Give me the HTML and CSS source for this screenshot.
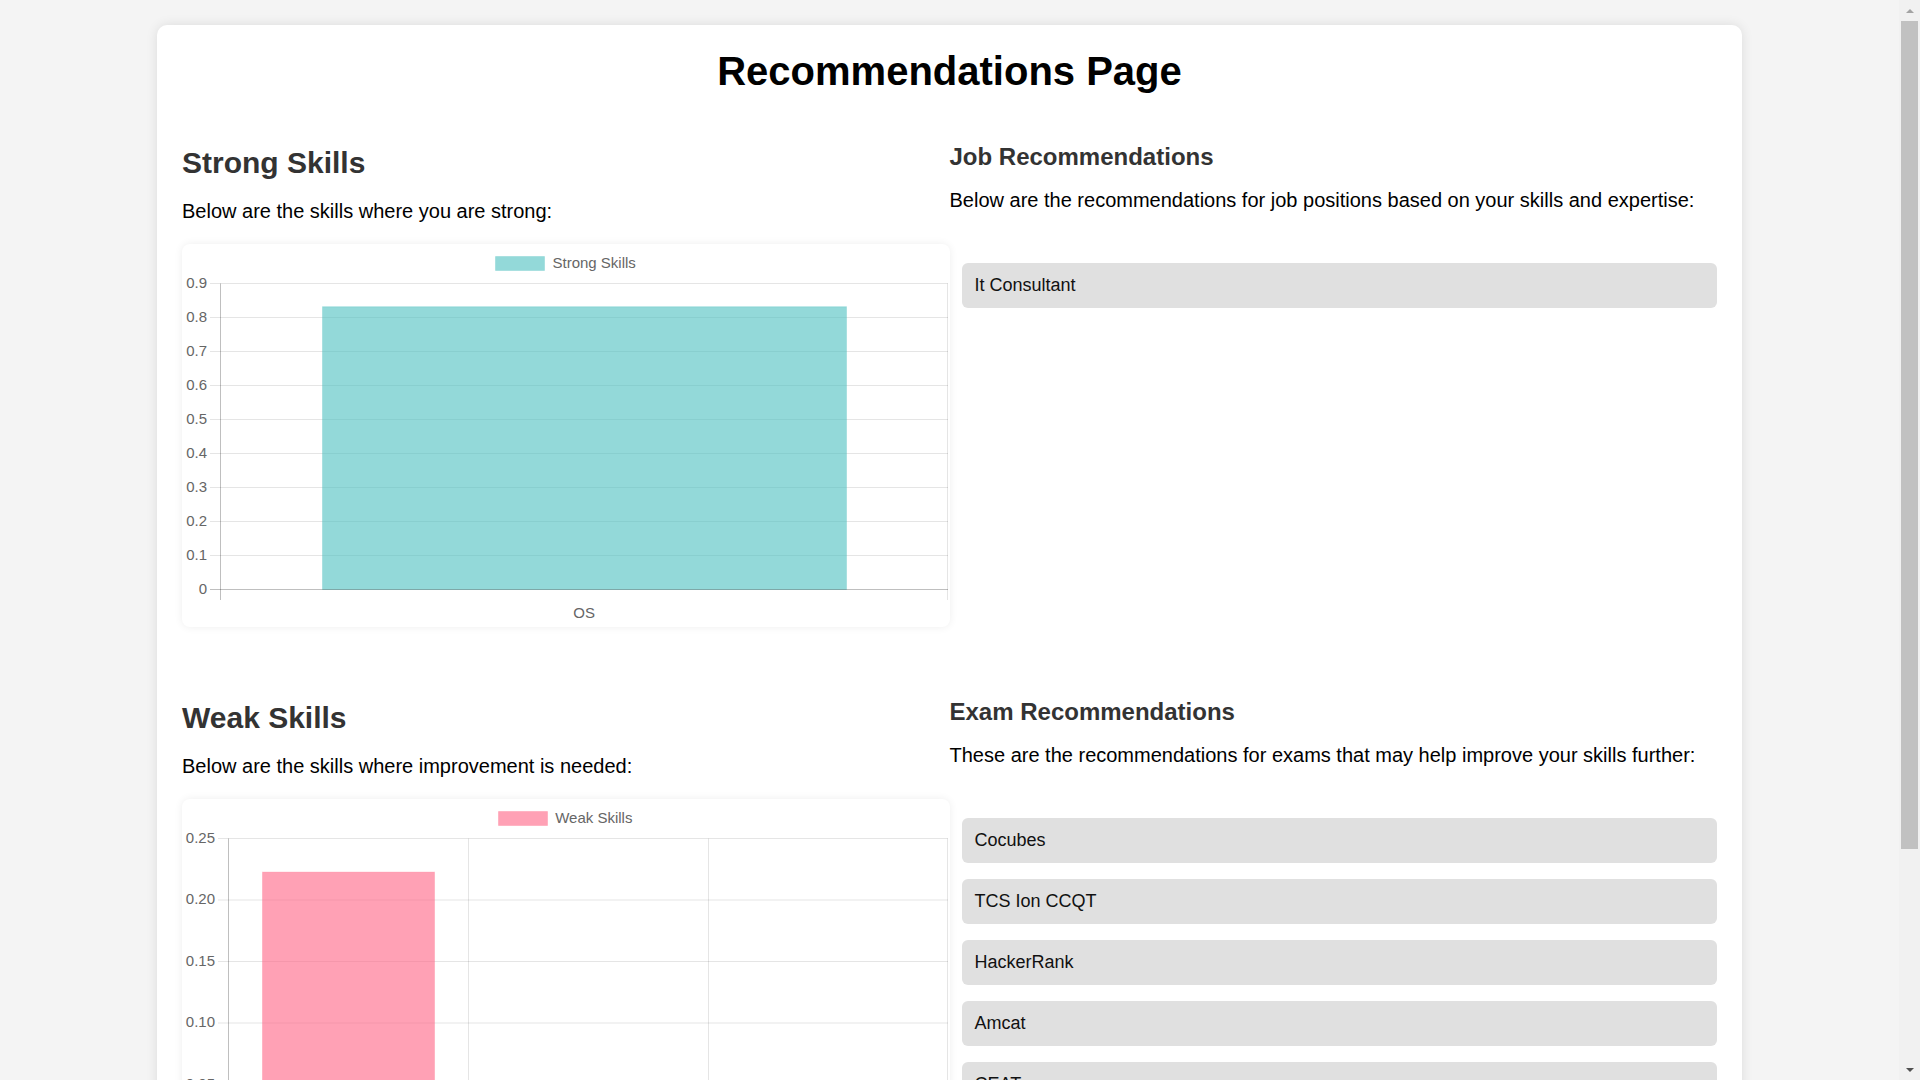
FILE: index.html
```html
<!DOCTYPE html>
<html lang="en">
<head>
<meta charset="utf-8">
<title>Recommendations Page</title>
<link rel="stylesheet" href="styles.css">
</head>
<body>
<div class="card">
  <h1 class="title">Recommendations Page</h1>

  <div class="row">
    <section class="col skills">
      <h2 class="skill-title">Strong Skills</h2>
      <p class="desc">Below are the skills where you are strong:</p>
      <div class="chart-box">
        <svg class="chart" width="767" height="383" viewBox="0 0 767 383">
          <rect class="leg-strong" x="313.5" y="12.5" width="49" height="14"/>
          <text class="axis-text" x="370.5" y="24">Strong Skills</text>
          <g class="grid">
            <line x1="28" y1="39.5" x2="766" y2="39.5"/>
            <line x1="28" y1="73.5" x2="766" y2="73.5"/>
            <line x1="28" y1="107.5" x2="766" y2="107.5"/>
            <line x1="28" y1="141.5" x2="766" y2="141.5"/>
            <line x1="28" y1="175.5" x2="766" y2="175.5"/>
            <line x1="28" y1="209.5" x2="766" y2="209.5"/>
            <line x1="28" y1="243.5" x2="766" y2="243.5"/>
            <line x1="28" y1="277.5" x2="766" y2="277.5"/>
            <line x1="28" y1="311.5" x2="766" y2="311.5"/>
            <line x1="765.5" y1="39.5" x2="765.5" y2="356"/>
          </g>
          <g class="axis-text end">
            <text x="25" y="43.5">0.9</text>
            <text x="25" y="77.5">0.8</text>
            <text x="25" y="111.5">0.7</text>
            <text x="25" y="145.5">0.6</text>
            <text x="25" y="179.5">0.5</text>
            <text x="25" y="213.5">0.4</text>
            <text x="25" y="247.5">0.3</text>
            <text x="25" y="281.5">0.2</text>
            <text x="25" y="315.5">0.1</text>
            <text x="25" y="349.5">0</text>
          </g>
          <rect class="bar-strong" x="140.5" y="62.7" width="524" height="282.8"/>
          <g class="zero">
            <line x1="28" y1="345.5" x2="766" y2="345.5"/>
            <line x1="38.5" y1="39.5" x2="38.5" y2="356"/>
          </g>
          <text class="axis-text mid" x="402.2" y="374">OS</text>
        </svg>
      </div>
    </section>

    <section class="col recs">
      <h3 class="rec-title">Job Recommendations</h3>
      <p class="desc">Below are the recommendations for job positions based on your skills and expertise:</p>
      <ul class="rec-list">
        <li class="rec-item">It Consultant</li>
      </ul>
    </section>
  </div>

  <div class="row">
    <section class="col skills">
      <h2 class="skill-title">Weak Skills</h2>
      <p class="desc">Below are the skills where improvement is needed:</p>
      <div class="chart-box">
        <svg class="chart" width="767" height="383" viewBox="0 0 767 383">
          <rect class="leg-weak" x="316.5" y="12.5" width="49" height="14"/>
          <text class="axis-text" x="373.2" y="24">Weak Skills</text>
          <g class="grid">
            <line x1="36" y1="39.5" x2="766" y2="39.5"/>
            <line x1="36" y1="101" x2="766" y2="101"/>
            <line x1="36" y1="162.5" x2="766" y2="162.5"/>
            <line x1="36" y1="224" x2="766" y2="224"/>
            <line x1="36" y1="285.5" x2="766" y2="285.5"/>
            <line x1="286.5" y1="39.5" x2="286.5" y2="357"/>
            <line x1="526.5" y1="39.5" x2="526.5" y2="357"/>
            <line x1="765.5" y1="39.5" x2="765.5" y2="357"/>
          </g>
          <g class="axis-text end">
            <text x="33" y="43.5">0.25</text>
            <text x="33" y="105">0.20</text>
            <text x="33" y="166.5">0.15</text>
            <text x="33" y="228">0.10</text>
            <text x="33" y="289.5">0.05</text>
            <text x="33" y="351">0</text>
          </g>
          <rect class="bar-weak" x="80.5" y="73.1" width="172" height="273.9"/>
          <rect class="bar-weak" x="320.5" y="309" width="172" height="38"/>
          <rect class="bar-weak" x="560.5" y="322" width="172" height="25"/>
          <g class="zero">
            <line x1="36" y1="347" x2="766" y2="347"/>
            <line x1="46.5" y1="39.5" x2="46.5" y2="357"/>
          </g>
          <g class="axis-text mid">
            <text x="166.4" y="375.5">DBMS</text>
            <text x="406.3" y="375.5">CN</text>
            <text x="646.2" y="375.5">DSA</text>
          </g>
        </svg>
      </div>
    </section>

    <section class="col recs">
      <h3 class="rec-title">Exam Recommendations</h3>
      <p class="desc">These are the recommendations for exams that may help improve your skills further:</p>
      <ul class="rec-list">
        <li class="rec-item">Cocubes</li>
        <li class="rec-item">TCS Ion CCQT</li>
        <li class="rec-item">HackerRank</li>
        <li class="rec-item">Amcat</li>
        <li class="rec-item">CEAT</li>
        <li class="rec-item">eLitmus</li>
        <li class="rec-item">Mettl</li>
        <li class="rec-item">CodeChef</li>
      </ul>
    </section>
  </div>
</div>

<div class="scrollbar" aria-hidden="true">
  <div class="sb-btn"><span class="sb-arrow-up"></span></div>
  <div class="sb-track"><div class="sb-thumb"></div></div>
  <div class="sb-btn"><span class="sb-arrow-down"></span></div>
</div>
</body>
</html>
```

FILE: styles.css
```css
html, body {
  margin: 0;
  padding: 0;
}

body {
  background: #f4f4f4;
  font-family: "Liberation Sans", Arial, Helvetica, sans-serif;
  color: #000;
  padding-right: 21px;
}

.card {
  width: 1535px;
  margin: 25px auto 25px;
  padding: 23px 25px 25px;
  background: #fff;
  border-radius: 10px;
  box-shadow: 0 0 12px rgba(0, 0, 0, 0.1);
}

.title {
  margin: 0 0 27px;
  font-size: 40px;
  line-height: 46px;
  font-weight: bold;
  text-align: center;
  color: #000;
}

.row {
  display: grid;
  grid-template-columns: 1fr 1fr;
  margin-bottom: 49px;
}

.row:last-child {
  margin-bottom: 0;
}

.col {
  min-width: 0;
}

.skill-title {
  margin: 24.5px 0 20px;
  font-size: 30px;
  line-height: 34.5px;
  font-weight: bold;
  color: #333;
}

.rec-title {
  margin: 22.4px 0 18.5px;
  font-size: 24px;
  line-height: 27.6px;
  font-weight: bold;
  color: #333;
}

.desc {
  margin: 0;
  font-size: 20px;
  line-height: 23px;
  color: #000;
}

.skills .desc {
  margin-bottom: 21px;
}

.chart-box {
  height: 383px;
  background: #fff;
  border-radius: 8px;
  box-shadow: 0 0 8px rgba(0, 0, 0, 0.07);
  overflow: hidden;
}

.chart {
  display: block;
}

.axis-text {
  font-family: "Liberation Sans", Arial, Helvetica, sans-serif;
  font-size: 15px;
  fill: #666;
}

.axis-text.end text,
.end {
  text-anchor: end;
}

.axis-text.mid,
.mid text {
  text-anchor: middle;
}

.grid line {
  stroke: rgba(0, 0, 0, 0.1);
  stroke-width: 1;
}

.zero line {
  stroke: rgba(0, 0, 0, 0.25);
  stroke-width: 1;
}

.bar-strong,
.leg-strong {
  fill: rgba(75, 192, 192, 0.6);
  stroke: rgba(75, 192, 192, 0.25);
  stroke-width: 1;
}

.bar-weak,
.leg-weak {
  fill: rgba(255, 99, 132, 0.6);
  stroke: rgba(255, 99, 132, 0.25);
  stroke-width: 1;
}

.rec-list {
  list-style: none;
  margin: 50.5px 0 0;
  padding: 0 0 0 12.5px;
}

.rec-item {
  margin-bottom: 15.5px;
  padding: 12.5px;
  font-size: 18px;
  line-height: 20.5px;
  background: #e0e0e0;
  border-radius: 6px;
  color: #111;
}

/* classic browser scrollbar drawn over the right edge */
.scrollbar {
  position: fixed;
  top: 0;
  right: 0;
  width: 21px;
  height: 100vh;
  display: flex;
  flex-direction: column;
  background: #f1f1f1;
}

.sb-btn {
  height: 21px;
  flex: none;
  display: flex;
  align-items: center;
  justify-content: center;
}

.sb-arrow-up {
  width: 0;
  height: 0;
  border-left: 4.5px solid transparent;
  border-right: 4.5px solid transparent;
  border-bottom: 4.5px solid #a3a3a3;
}

.sb-arrow-down {
  width: 0;
  height: 0;
  border-left: 4.5px solid transparent;
  border-right: 4.5px solid transparent;
  border-top: 4.5px solid #505050;
}

.sb-track {
  flex: 1;
  padding: 0 2px;
}

.sb-thumb {
  height: 828px;
  background: #c1c1c1;
}
```
